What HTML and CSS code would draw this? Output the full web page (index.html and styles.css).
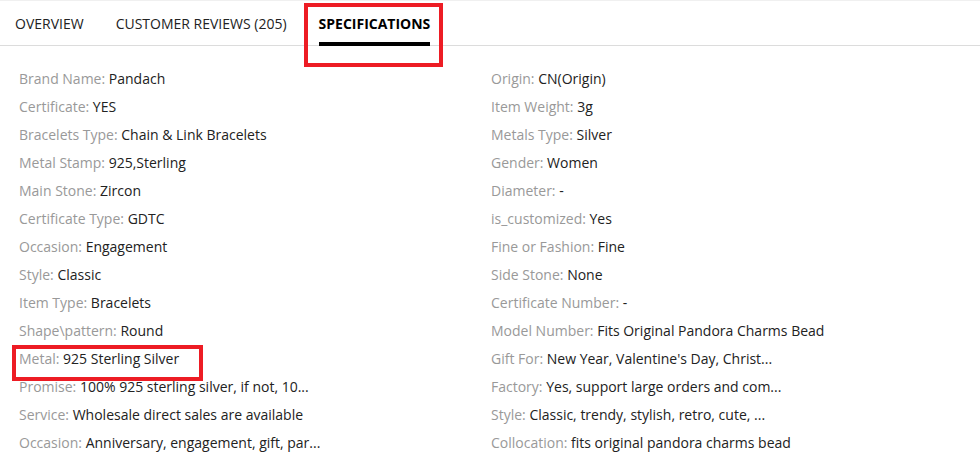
FILE: index.html
```html
<!DOCTYPE html>
<html>
<head>
<meta charset="utf-8">
<link rel="stylesheet" href="styles.css">
</head>
<body>
<div class="page">
  <nav class="tabs">
    <div class="tab">OVERVIEW</div>
    <div class="tab">CUSTOMER REVIEWS (205)</div>
    <div class="tab active">SPECIFICATIONS</div>
  </nav>
  <div class="specs">
    <ul class="col">
      <li><span class="k">Brand Name:</span> <span class="v">Pandach</span></li>
      <li><span class="k">Certificate:</span> <span class="v">YES</span></li>
      <li><span class="k">Bracelets Type:</span> <span class="v">Chain &amp; Link Bracelets</span></li>
      <li><span class="k">Metal Stamp:</span> <span class="v">925,Sterling</span></li>
      <li><span class="k">Main Stone:</span> <span class="v">Zircon</span></li>
      <li><span class="k">Certificate Type:</span> <span class="v">GDTC</span></li>
      <li><span class="k">Occasion:</span> <span class="v">Engagement</span></li>
      <li><span class="k">Style:</span> <span class="v">Classic</span></li>
      <li><span class="k">Item Type:</span> <span class="v">Bracelets</span></li>
      <li><span class="k">Shape\pattern:</span> <span class="v">Round</span></li>
      <li class="marked"><span class="k">Metal:</span> <span class="v">925 Sterling Silver</span></li>
      <li><span class="k">Promise:</span> <span class="v">100% 925 sterling silver, if not, 10...</span></li>
      <li><span class="k">Service:</span> <span class="v">Wholesale direct sales are available</span></li>
      <li><span class="k">Occasion:</span> <span class="v">Anniversary, engagement, gift, par...</span></li>
    </ul>
    <ul class="col">
      <li><span class="k">Origin:</span> <span class="v">CN(Origin)</span></li>
      <li><span class="k">Item Weight:</span> <span class="v">3g</span></li>
      <li><span class="k">Metals Type:</span> <span class="v">Silver</span></li>
      <li><span class="k">Gender:</span> <span class="v">Women</span></li>
      <li><span class="k">Diameter:</span> <span class="v">-</span></li>
      <li><span class="k">is_customized:</span> <span class="v">Yes</span></li>
      <li><span class="k">Fine or Fashion:</span> <span class="v">Fine</span></li>
      <li><span class="k">Side Stone:</span> <span class="v">None</span></li>
      <li><span class="k">Certificate Number:</span> <span class="v">-</span></li>
      <li><span class="k">Model Number:</span> <span class="v">Fits Original Pandora Charms Bead</span></li>
      <li><span class="k">Gift For:</span> <span class="v">New Year, Valentine's Day, Christ...</span></li>
      <li><span class="k">Factory:</span> <span class="v">Yes, support large orders and com...</span></li>
      <li><span class="k">Style:</span> <span class="v">Classic, trendy, stylish, retro, cute, ...</span></li>
      <li><span class="k">Collocation:</span> <span class="v">fits original pandora charms bead</span></li>
    </ul>
  </div>
</div>
</body>
</html>
```

FILE: styles.css
```css
* { box-sizing: border-box; }
html, body { margin: 0; padding: 0; background: #fff; }
body {
  font-family: "Open Sans", "Liberation Sans", sans-serif;
  color: #333;
  width: 980px;
  height: 473px;
  overflow: hidden;
}
.page { border-top: 1px solid #f0f0f0; }
.tabs {
  display: flex;
  gap: 32px;
  padding-left: 15px;
  height: 44px;
  border-bottom: 1px solid #dcdcdc;
  box-sizing: content-box;
}
.tab {
  height: 45px;
  padding-top: 13px;
  font-size: 14px;
  line-height: 20px;
  color: #222;
  position: relative;
  margin-bottom: -1px;
}
.tab.active {
  font-weight: 700;
  color: #000;
  border-bottom: 4px solid #000;
}
.tab.active::after {
  content: "";
  position: absolute;
  left: -15px;
  right: -13px;
  top: 2px;
  height: 56px;
  border: 4px solid #ed1c24;
}
.specs {
  display: flex;
  padding: 19px 0 0 19px;
}
.col {
  list-style: none;
  margin: 0;
  padding: 0;
  width: 472px;
}
.col li {
  height: 28px;
  line-height: 28px;
  font-size: 14px;
  white-space: nowrap;
  position: relative;
}
.k { color: #999; }
.v { color: #222; }
.col li.marked::after {
  content: "";
  position: absolute;
  left: -7px;
  top: 0;
  width: 183px;
  height: 28px;
  border: 4px solid #ed1c24;
}
```
